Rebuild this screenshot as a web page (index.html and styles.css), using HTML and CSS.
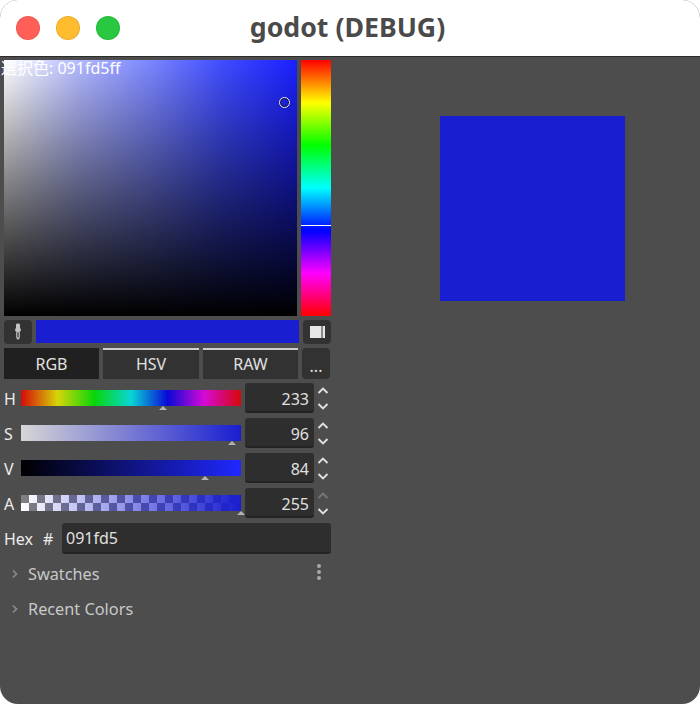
FILE: index.html
```html
<!DOCTYPE html>
<html lang="en">
<head>
    <meta charset="UTF-8">
    <meta name="viewport" content="width=device-width, initial-scale=1.0">
    <title>godot (DEBUG)</title>
    <link rel="stylesheet" href="styles.css">
</head>
<body>
    <div class="window">
        <header class="titlebar">
            <div class="lights">
                <span class="light light-red"></span>
                <span class="light light-yellow"></span>
                <span class="light light-green"></span>
            </div>
            <div class="title">godot (DEBUG)</div>
        </header>

        <main class="content">
            <div class="picked-label">選択色: 091fd5ff</div>

            <section class="picker">
                <div class="pick-area">
                    <div class="sv-box">
                        <span class="sv-cursor" style="left: 272px; top: 37px;"></span>
                    </div>
                    <div class="hue-bar">
                        <span class="hue-line" style="top: 165px;"></span>
                    </div>
                </div>

                <div class="preview-row">
                    <button class="icon-btn dropper-btn" type="button">
                        <svg width="10" height="18" viewBox="0 0 10 18">
                            <path d="M3 1.5Q3 .5 5 .5T7 1.5V5.5H3z M2.2 5.5H7.8V8.2H2.2z M3.2 8.2H6.8V14.5L5.8 16.5H4.2L3.2 14.5z M4.4 9.2V14.4H5.6V9.2z" fill="#c4c4c4" fill-rule="evenodd"/>
                        </svg>
                    </button>
                    <div class="current-color"></div>
                    <button class="icon-btn sample-btn" type="button">
                        <span class="sample-icon"></span>
                    </button>
                </div>

                <div class="tabs">
                    <div class="tab tab-active">RGB</div>
                    <div class="tab">HSV</div>
                    <div class="tab tab-raw">RAW</div>
                    <div class="tab-more">...</div>
                </div>

                <div class="slider-row">
                    <span class="slider-label">H</span>
                    <div class="slider-wrap">
                        <div class="slider slider-h"></div>
                        <span class="thumb" style="left: 142px;"></span>
                    </div>
                    <div class="spin-input">233</div>
                    <div class="spin-arrows">
                        <svg width="14" height="9" viewBox="0 0 14 9"><path d="M2.5 7 7 2.5 11.5 7" class="chevron"/></svg>
                        <svg width="14" height="9" viewBox="0 0 14 9"><path d="M2.5 2 7 6.5 11.5 2" class="chevron"/></svg>
                    </div>
                </div>

                <div class="slider-row">
                    <span class="slider-label">S</span>
                    <div class="slider-wrap">
                        <div class="slider slider-s"></div>
                        <span class="thumb" style="left: 211px;"></span>
                    </div>
                    <div class="spin-input">96</div>
                    <div class="spin-arrows">
                        <svg width="14" height="9" viewBox="0 0 14 9"><path d="M2.5 7 7 2.5 11.5 7" class="chevron"/></svg>
                        <svg width="14" height="9" viewBox="0 0 14 9"><path d="M2.5 2 7 6.5 11.5 2" class="chevron"/></svg>
                    </div>
                </div>

                <div class="slider-row">
                    <span class="slider-label">V</span>
                    <div class="slider-wrap">
                        <div class="slider slider-v"></div>
                        <span class="thumb" style="left: 184px;"></span>
                    </div>
                    <div class="spin-input">84</div>
                    <div class="spin-arrows">
                        <svg width="14" height="9" viewBox="0 0 14 9"><path d="M2.5 7 7 2.5 11.5 7" class="chevron"/></svg>
                        <svg width="14" height="9" viewBox="0 0 14 9"><path d="M2.5 2 7 6.5 11.5 2" class="chevron"/></svg>
                    </div>
                </div>

                <div class="slider-row">
                    <span class="slider-label">A</span>
                    <div class="slider-wrap">
                        <div class="slider slider-a"></div>
                        <span class="thumb" style="left: 220px;"></span>
                    </div>
                    <div class="spin-input">255</div>
                    <div class="spin-arrows">
                        <svg width="14" height="9" viewBox="0 0 14 9"><path d="M2.5 7 7 2.5 11.5 7" class="chevron chevron-dim"/></svg>
                        <svg width="14" height="9" viewBox="0 0 14 9"><path d="M2.5 2 7 6.5 11.5 2" class="chevron"/></svg>
                    </div>
                </div>

                <div class="hex-row">
                    <span class="hex-label">Hex</span>
                    <span class="hex-hash">#</span>
                    <div class="hex-input">091fd5</div>
                </div>

                <div class="fold-row">
                    <svg width="8" height="10" viewBox="0 0 8 10"><path d="M2 1.5 5.5 5 2 8.5" class="fold-arrow"/></svg>
                    <span class="fold-text">Swatches</span>
                    <span class="kebab"><i></i><i></i><i></i></span>
                </div>
                <div class="fold-row">
                    <svg width="8" height="10" viewBox="0 0 8 10"><path d="M2 1.5 5.5 5 2 8.5" class="fold-arrow"/></svg>
                    <span class="fold-text">Recent Colors</span>
                </div>
            </section>

            <section class="canvas">
                <div class="color-square"></div>
            </section>
        </main>
    </div>
</body>
</html>
```

FILE: styles.css
```css
* {
    box-sizing: border-box;
}

html, body {
    margin: 0;
    height: 100%;
    background-color: #fff;
}

body {
    font-family: "Noto Sans", "Open Sans", sans-serif;
    overflow: hidden;
}

.window {
    height: 704px;
    display: flex;
    flex-direction: column;
    border-radius: 18px;
    overflow: hidden;
    background-color: #4d4d4d;
}

/* Title bar */
.titlebar {
    height: 57px;
    flex: none;
    display: flex;
    align-items: center;
    position: relative;
    background-color: #fff;
    border-bottom: 1px solid #2b2b2b;
}

.lights {
    display: flex;
    gap: 16px;
    padding-left: 16px;
}

.light {
    width: 24px;
    height: 24px;
    border-radius: 50%;
    border: 1px solid rgba(0, 0, 0, 0.08);
}

.light-red { background-color: #ff5f57; }
.light-yellow { background-color: #febc2e; }
.light-green { background-color: #28c840; }

.title {
    position: absolute;
    left: 0;
    right: 5px;
    top: 9px;
    text-align: center;
    font-size: 26.7px;
    line-height: 36px;
    font-weight: 700;
    color: #4a4a4a;
}

/* Content */
.content {
    flex: 1;
    display: flex;
    position: relative;
    color: #e0e0e0;
}

.picked-label {
    position: absolute;
    left: 1px;
    top: 0;
    font-family: "Noto Sans", "Noto Sans CJK JP", sans-serif;
    font-size: 16px;
    line-height: 22px;
    color: #fff;
    z-index: 2;
}

.picker {
    width: 335px;
    flex: none;
    padding: 3px 0 0 4px;
}

.pick-area {
    display: flex;
    gap: 4px;
}

.sv-box {
    width: 293px;
    height: 256px;
    position: relative;
    background:
        linear-gradient(to bottom, transparent, #000),
        linear-gradient(to right, #fff, #b4baff 25%, #7b86ff 50%, #3f4cff 75%, #1a20ff);
}

.sv-cursor {
    position: absolute;
    width: 11px;
    height: 11px;
    margin-left: 3px;
    border-radius: 50%;
    border: 1px solid #e8e8ff;
    box-shadow: inset 0 0 0 1px #111;
}

.hue-bar {
    width: 30px;
    height: 256px;
    position: relative;
    background: linear-gradient(to bottom, #f00, #ff0, #0f0, #0ff, #00f, #f0f, #f00);
}

.hue-line {
    position: absolute;
    left: 0;
    right: 0;
    height: 1px;
    background-color: #fff;
}

.preview-row {
    display: flex;
    margin-top: 4px;
    height: 24px;
}

.icon-btn {
    width: 28px;
    height: 24px;
    padding: 0;
    border: none;
    border-radius: 4px;
    background-color: #323232;
    display: flex;
    align-items: center;
    justify-content: center;
}

.current-color {
    width: 263px;
    height: 23px;
    margin: 0 4px;
    background-color: #191ed0;
}

.sample-icon {
    width: 15px;
    height: 12px;
    background: linear-gradient(to right, #e6e6e6 74%, #8a8a8a 74% 84%, #e6e6e6 84%);
}

.tabs {
    display: flex;
    margin-top: 4px;
    height: 31px;
}

.tab {
    width: 96px;
    margin-right: 4px;
    font-size: 16px;
    line-height: 29px;
    text-align: center;
    color: #e0e0e0;
    background-color: #323232;
    border-top: 2px solid #cfcfcf;
}

.tab-active {
    width: 95px;
    background-color: #202020;
    border-top-color: #202020;
}

.tab-raw {
    width: 95px;
}

.tab-more {
    width: 28px;
    margin-right: 0;
    border-radius: 4px;
    font-size: 16px;
    line-height: 36px;
    text-align: center;
    color: #e0e0e0;
    background-color: #323232;
}

/* Sliders */
.slider-row {
    display: flex;
    align-items: flex-start;
    height: 30px;
    margin-top: 5px;
}

.tabs + .slider-row {
    margin-top: 4px;
}

.slider-label {
    width: 17px;
    font-size: 16px;
    line-height: 32px;
    color: #ececec;
}

.slider-wrap {
    width: 220px;
    position: relative;
    padding-top: 7px;
    margin-right: 4px;
}

.slider {
    height: 16px;
}

.slider-h {
    background: linear-gradient(to right, #d60909, #d6d609, #09d609, #09d6d6, #0909d6, #d609d6, #d60909);
}

.slider-s {
    background: linear-gradient(to right, #d6d6d6, #191ed0);
}

.slider-v {
    background: linear-gradient(to right, #000, #1f28ff);
}

.slider-a {
    background:
        linear-gradient(to right, transparent, #191ed0),
        conic-gradient(#fff 25%, #808080 0 50%, #fff 0 75%, #808080 0) 0 0 / 16px 16px;
}

.thumb {
    position: absolute;
    top: 23px;
    width: 0;
    height: 0;
    margin-left: -4px;
    border-left: 4px solid transparent;
    border-right: 4px solid transparent;
    border-bottom: 4px solid #b4b4b4;
}

.spin-input {
    width: 69px;
    height: 30px;
    padding-right: 5px;
    font-size: 16px;
    line-height: 32px;
    text-align: right;
    color: #e0e0e0;
    background-color: #2e2e2e;
    border-bottom: 2px solid #232323;
    border-radius: 3px;
}

.spin-arrows {
    width: 14px;
    margin-left: 2px;
    padding-top: 3px;
    display: flex;
    flex-direction: column;
    align-items: center;
    gap: 7px;
}

.spin-arrows svg {
    display: block;
}

.chevron {
    fill: none;
    stroke: #e0e0e0;
    stroke-width: 1.9;
}

.chevron-dim {
    stroke: #777;
}

/* Hex */
.hex-row {
    display: flex;
    align-items: center;
    height: 31px;
    margin-top: 5px;
    font-size: 16px;
    color: #ececec;
}

.hex-label {
    width: 39px;
}

.hex-hash {
    width: 19px;
}

.hex-input {
    width: 269px;
    height: 31px;
    padding-left: 4px;
    line-height: 31px;
    color: #e0e0e0;
    background-color: #2e2e2e;
    border-bottom: 2px solid #232323;
    border-radius: 3px;
}

/* Foldable sections */
.fold-row {
    display: flex;
    align-items: center;
    height: 35px;
    padding-left: 7px;
    font-size: 16.3px;
    color: #c8c8c8;
}

.hex-row + .fold-row {
    margin-top: 2px;
}

.fold-arrow {
    fill: none;
    stroke: #8c8c8c;
    stroke-width: 1.7;
}

.fold-text {
    margin-left: 9px;
    flex: 1;
}

.kebab {
    display: flex;
    flex-direction: column;
    gap: 2px;
    margin: 0 14px 3px 0;
}

.kebab i {
    width: 4px;
    height: 4px;
    border-radius: 50%;
    background-color: #a8a8a8;
}

/* Right side */
.canvas {
    flex: 1;
    padding: 59px 0 0 105px;
}

.color-square {
    width: 185px;
    height: 185px;
    background-color: #191ed0;
}
```
